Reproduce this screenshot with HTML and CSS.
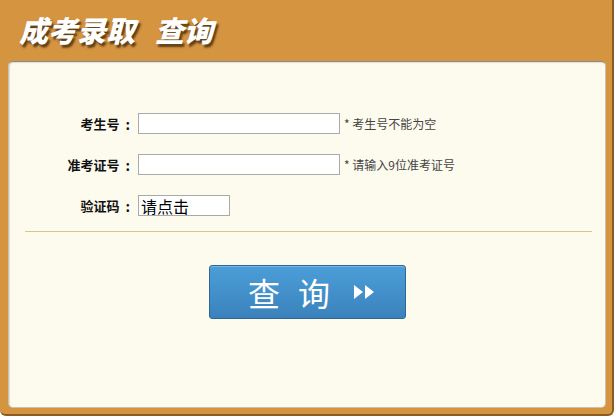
FILE: index.html
```html
<!DOCTYPE html>
<html lang="zh-CN">
<head>
<meta charset="utf-8">
<title>成考录取查询</title>
<link rel="stylesheet" href="styles.css">
</head>
<body>
<div class="frame">
  <h1 class="title">成考录取<span class="title-gap">查询</span></h1>
  <div class="panel">
    <form class="form">
      <div class="row">
        <label class="label">考生号<span class="colon">:</span></label>
        <input class="field" type="text">
        <span class="hint">* 考生号不能为空</span>
      </div>
      <div class="row">
        <label class="label">准考证号<span class="colon">:</span></label>
        <input class="field" type="text">
        <span class="hint">* 请输入9位准考证号</span>
      </div>
      <div class="row">
        <label class="label">验证码<span class="colon">:</span></label>
        <input class="field code" type="text" value="请点击">
      </div>
      <div class="divider"></div>
      <div class="actions">
        <button class="submit" type="button">
          <span class="submit-text">查</span>
          <span class="submit-text second">询</span>
          <svg class="arrows" width="21" height="14" viewBox="0 0 21 14">
            <polygon points="0,0 9,7 0,14" fill="#fff"/>
            <polygon points="11,0 20,7 11,14" fill="#fff"/>
          </svg>
        </button>
      </div>
    </form>
  </div>
</div>
</body>
</html>
```
FILE: styles.css
```css
html, body {
  margin: 0;
  padding: 0;
  background: #fff;
}

body {
  font-family: "Noto Sans CJK SC", "Liberation Sans", sans-serif;
}

.frame {
  width: 614px;
  height: 416px;
  background: #d49440;
  border-right: 2px solid #8a5c22;
  border-bottom: 2px solid #8a5c22;
  border-radius: 0 0 6px 6px;
  padding: 0 8px;
  box-sizing: border-box;
  display: flex;
  flex-direction: column;
}

.title {
  margin: 0;
  height: 61px;
  padding: 9px 0 0 11px;
  box-sizing: border-box;
  font-size: 29px;
  font-weight: 900;
  font-style: italic;
  color: #fff;
  line-height: 40px;
  text-shadow: 2px 3px 2px #5e3f18;
  white-space: nowrap;
}

.title-gap {
  margin-left: 20px;
}

.panel {
  width: 598px;
  height: 347px;
  background: #fdfaee;
  border: 1px solid #c7c2b2;
  border-top-color: #8c8c8c;
  border-radius: 5px;
  box-sizing: border-box;
  box-shadow: inset 1px 1px 1px rgba(0, 0, 0, 0.12);
}

.form {
  padding-top: 51px;
}

.row {
  display: flex;
  align-items: center;
  height: 21px;
  margin-bottom: 20px;
}

.row:nth-child(3) {
  margin-bottom: 15px;
}

.label {
  width: 129px;
  display: flex;
  justify-content: flex-end;
  align-items: center;
  font-size: 13px;
  font-weight: bold;
  color: #111;
  padding-right: 8px;
  box-sizing: border-box;
}

.colon {
  margin-left: 6px;
  font-size: 14px;
}

.field {
  width: 202px;
  height: 21px;
  margin: 0;
  padding: 0 2px;
  border: 1px solid #aaa;
  background: #fff;
  box-sizing: border-box;
  font-family: inherit;
}

.field.code {
  width: 92px;
  font-size: 16px;
  line-height: 19px;
  color: #000;
}

.hint {
  margin-left: 4px;
  font-size: 12px;
  color: #444;
}

.divider {
  height: 1px;
  background: #d6c48a;
  margin: 0 13px 0 16px;
}

.actions {
  display: flex;
  padding: 33px 0 0 200px;
}

.submit {
  width: 197px;
  height: 54px;
  border: 1px solid #2d6797;
  border-radius: 3px;
  background: linear-gradient(#4b9ed8, #3b82bc);
  box-shadow: inset 0 1px 0 rgba(255, 255, 255, 0.25);
  color: #fff;
  display: flex;
  align-items: center;
  padding: 0 0 0 38px;
  cursor: pointer;
  font-family: inherit;
}

.submit-text {
  font-size: 32px;
  line-height: 1;
}

.submit-text.second {
  margin-left: 18px;
}

.arrows {
  margin-left: 24px;
}
```
